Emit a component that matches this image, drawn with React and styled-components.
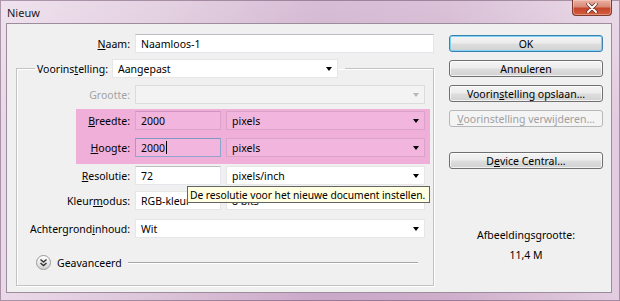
import styled, { createGlobalStyle } from 'styled-components';

const Global = createGlobalStyle`
  * { box-sizing: border-box; }
  body {
    margin: 0;
    background: #fff;
    font-family: "Noto Sans", "Open Sans", sans-serif;
    font-size: 10.5px;
    color: #000;
  }
`;

export default function App() {
  return (
    <>
      <Global />
      <Window>
        <TitleBar>
          <Title>Nieuw</Title>
          <CloseButton>
            <svg width="14" height="10" viewBox="0 0 14 10">
              <path d="M3 1 L11 9 M11 1 L3 9" stroke="#5a2a22" strokeWidth="3.4" strokeLinecap="round" />
              <path d="M3 1 L11 9 M11 1 L3 9" stroke="#fff" strokeWidth="2" strokeLinecap="round" />
            </svg>
          </CloseButton>
        </TitleBar>
        <Client>
          <FormCol>
            <Row>
              <Label $w={123}><u>N</u>aam:</Label>
              <Input $w={299}>Naamloos-1</Input>
            </Row>

            <Group>
              <Legend>
                <LegendInner>
                  <span>Voorins<u>t</u>elling:</span>
                  <Dropdown $w={226}>
                    <span>Aangepast</span>
                    <Arrow />
                  </Dropdown>
                </LegendInner>
              </Legend>

              <Row $mt={7}>
                <Label $w={113} $disabled>Grootte:</Label>
                <Dropdown $w={290} $disabled>
                  <span />
                  <Arrow $disabled />
                </Dropdown>
              </Row>

              <Band>
                <Row>
                  <Label $w={54}><u>B</u>reedte:</Label>
                  <Input $w={86} $pink>2000</Input>
                  <Dropdown $w={199} $pink>
                    <span>pixels</span>
                    <Arrow />
                  </Dropdown>
                </Row>
                <Row $mt={8}>
                  <Label $w={54}><u>H</u>oogte:</Label>
                  <Input $w={86} $pink $focus>2000<Caret /></Input>
                  <Dropdown $w={199} $pink>
                    <span>pixels</span>
                    <Arrow />
                  </Dropdown>
                </Row>
              </Band>

              <Row $mt={2}>
                <Label $w={113}><u>R</u>esolutie:</Label>
                <Input $w={86}>72</Input>
                <Dropdown $w={199}>
                  <span>pixels/inch</span>
                  <Arrow />
                </Dropdown>
              </Row>

              <Row $mt={6}>
                <Label $w={113}>Kleur<u>m</u>odus:</Label>
                <Dropdown $w={86}>
                  <span>RGB-kleur</span>
                  <Arrow />
                </Dropdown>
                <Dropdown $w={199}>
                  <span>8 bits</span>
                  <Arrow />
                </Dropdown>
              </Row>

              <Row $mt={9}>
                <Label $w={113}>Achtergrond<u>i</u>nhoud:</Label>
                <Dropdown $w={290}>
                  <span>Wit</span>
                  <Arrow />
                </Dropdown>
              </Row>

              <AdvancedRow>
                <RoundButton>
                  <svg width="9" height="9" viewBox="0 0 9 9">
                    <path d="M1.5 1.5 L4.5 4 L7.5 1.5 M1.5 5 L4.5 7.5 L7.5 5" fill="none" stroke="#333" strokeWidth="1.4" />
                  </svg>
                </RoundButton>
                <span>Geavanceerd</span>
                <Rule />
              </AdvancedRow>
            </Group>
          </FormCol>

          <ButtonCol>
            <Button $default>OK</Button>
            <Button>Annuleren</Button>
            <Button>Voorin<u>s</u>telling opslaan...</Button>
            <Button $disabled><u>V</u>oorinstelling verwijderen...</Button>
            <Button $mt={17}>D<u>e</u>vice Central...</Button>
            <Info>
              <span>Afbeeldingsgrootte:</span>
              <span>11,4 M</span>
            </Info>
          </ButtonCol>
        </Client>
        <Tooltip>De resolutie voor het nieuwe document instellen.</Tooltip>
      </Window>
    </>
  );
}

const Window = styled.div`
  position: relative;
  width: 620px;
  height: 301px;
  display: flex;
  flex-direction: column;
  padding: 0 8px 8px 6px;
  background:
    linear-gradient(180deg, rgba(255,255,255,0.25) 0%, rgba(255,255,255,0) 40%),
    linear-gradient(90deg, #ead9e8 0%, #dcc4d9 25%, #caa8c8 52%, #ceaecb 72%, #e3cde0 100%);
  box-shadow: inset 0 0 0 1px rgba(90, 60, 90, 0.45);
`;

const TitleBar = styled.div`
  height: 23px;
  display: flex;
  align-items: flex-start;
  padding-left: 1px;
`;

const Title = styled.span`
  margin-top: 5px;
  font-size: 11px;
  color: #1a1a1a;
`;

const CloseButton = styled.div`
  margin-left: auto;
  width: 40px;
  height: 16px;
  display: flex;
  align-items: center;
  justify-content: center;
  border: 1px solid #7c3a30;
  border-top: none;
  border-radius: 0 0 4px 4px;
  background: linear-gradient(180deg, #eab1a3 0%, #d98a76 45%, #c4452b 55%, #d45d3b 100%);
  box-shadow: inset 0 0 0 1px rgba(255, 220, 210, 0.4);
`;

const Client = styled.div`
  flex: 1;
  display: flex;
  background: #f0f0f0;
  border: 1px solid #9d8c9b;
`;

const FormCol = styled.div`
  width: 442px;
  padding-top: 10px;
`;

const Row = styled.div`
  display: flex;
  align-items: center;
  gap: 5px;
  margin-top: ${p => p.$mt || 0}px;
`;

const Label = styled.span`
  width: ${p => p.$w}px;
  text-align: right;
  white-space: nowrap;
  color: ${p => (p.$disabled ? '#a3a3a3' : '#000')};
`;

const Input = styled.div`
  width: ${p => p.$w}px;
  height: 19px;
  display: flex;
  align-items: center;
  padding-left: 5px;
  background: ${p => (p.$pink ? '#f2b6de' : '#fff')};
  border: 1px solid ${p => (p.$focus ? '#8ea6cf' : p.$pink ? '#dca3c9' : '#e3e6ea')};
  border-top-color: ${p => (p.$focus ? '#7f97c4' : p.$pink ? '#cf94bb' : '#b9bcc2')};
`;

const Caret = styled.span`
  width: 1px;
  height: 13px;
  background: #000;
  margin-left: 1px;
`;

const Dropdown = styled.div`
  width: ${p => p.$w}px;
  height: 19px;
  display: flex;
  align-items: center;
  justify-content: space-between;
  padding: 0 5px 0 5px;
  background: ${p => (p.$disabled ? '#f3f3f3' : p.$pink ? '#f2b6de' : '#fff')};
  border: 1px solid ${p => (p.$disabled ? '#dcdcdc' : p.$pink ? '#dca3c9' : '#e6e6e6')};
`;

const Arrow = styled.span`
  width: 0;
  height: 0;
  border-left: 3.5px solid transparent;
  border-right: 3.5px solid transparent;
  border-top: 4px solid ${p => (p.$disabled ? '#b8b8b8' : '#000')};
`;

const Group = styled.fieldset`
  margin: 6px 0 0 9px;
  width: 418px;
  padding: 0 0 15px 0;
  border: 1px solid #c3c3c3;
  box-shadow: inset 1px 1px 0 #fff, 1px 1px 0 #fff;
  min-width: 0;
`;

const Legend = styled.legend`
  margin-left: 18px;
  padding: 0 7px 0 2px;
`;

const LegendInner = styled.div`
  display: flex;
  align-items: center;
  gap: 4px;
`;

const Band = styled.div`
  margin: 5px 0 0 59px;
  width: 354px;
  padding: 2px 0 7px;
  background: #efafd9;
`;

const AdvancedRow = styled.div`
  display: flex;
  align-items: center;
  gap: 6px;
  margin-top: 17px;
  padding: 0 15px 0 19px;
`;

const RoundButton = styled.span`
  width: 15px;
  height: 15px;
  border-radius: 50%;
  display: flex;
  align-items: center;
  justify-content: center;
  border: 1px solid #9a9a9a;
  background: linear-gradient(180deg, #ffffff 0%, #e6e6e6 60%, #d2d2d2 100%);
`;

const Rule = styled.span`
  flex: 1;
  height: 2px;
  border-top: 1px solid #a7a7a7;
  border-bottom: 1px solid #fff;
`;

const ButtonCol = styled.div`
  width: 154px;
  padding-top: 11px;
  display: flex;
  flex-direction: column;
  gap: 8px;
`;

const Button = styled.div`
  height: 17px;
  margin-top: ${p => p.$mt || 0}px;
  display: flex;
  align-items: center;
  justify-content: center;
  border-radius: 3px;
  border: 1px solid ${p => (p.$default ? '#3c7fb1' : p.$disabled ? '#b5b8bb' : '#707070')};
  color: ${p => (p.$disabled ? '#a0a0a0' : '#000')};
  background: ${p =>
    p.$disabled
      ? '#f4f4f4'
      : 'linear-gradient(180deg, #f4f4f4 0%, #ececec 48%, #dedede 52%, #d1d1d1 100%)'};
  box-shadow: ${p =>
    p.$default ? 'inset 0 0 0 1px #7fd4f5' : p.$disabled ? 'none' : 'inset 0 0 0 1px rgba(255,255,255,0.7)'};
`;

const Info = styled.div`
  margin-top: 51px;
  display: flex;
  flex-direction: column;
  align-items: center;
  gap: 6px;
`;

const Tooltip = styled.div`
  position: absolute;
  left: 187px;
  top: 186px;
  width: 243px;
  height: 17px;
  display: flex;
  align-items: center;
  padding-left: 2px;
  font-size: 10.3px;
  letter-spacing: -0.05px;
  background: #ffffe1;
  border: 1px solid #646464;
  white-space: nowrap;
  overflow: hidden;
`;
